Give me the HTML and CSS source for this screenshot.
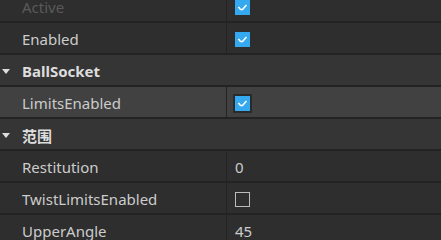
FILE: index.html
```html
<!DOCTYPE html>
<html lang="zh">
<head>
    <meta charset="UTF-8">
    <title>Properties</title>
    <link rel="stylesheet" href="styles.css">
</head>
<body>
    <div class="props">
        <div class="row first">
            <div class="name dim">Active</div>
            <div class="value"><span class="check on"><svg viewBox="0 0 15 15"><polyline points="3.5,7 5.5,9.5 7.5,9.5 11.5,5"/></svg></span></div>
        </div>
        <div class="row">
            <div class="name">Enabled</div>
            <div class="value"><span class="check on"><svg viewBox="0 0 15 15"><polyline points="3.5,7 5.5,9.5 7.5,9.5 11.5,5"/></svg></span></div>
        </div>
        <div class="row group">
            <span class="arrow"></span>
            <div class="name">BallSocket</div>
        </div>
        <div class="row selected">
            <div class="name">LimitsEnabled</div>
            <div class="value"><span class="focus"><span class="check on"><svg viewBox="0 0 15 15"><polyline points="3.5,7 5.5,9.5 7.5,9.5 11.5,5"/></svg></span></span></div>
        </div>
        <div class="row group">
            <span class="arrow"></span>
            <div class="name">范围</div>
        </div>
        <div class="row">
            <div class="name">Restitution</div>
            <div class="value">0</div>
        </div>
        <div class="row">
            <div class="name">TwistLimitsEnabled</div>
            <div class="value"><span class="check"></span></div>
        </div>
        <div class="row">
            <div class="name">UpperAngle</div>
            <div class="value">45</div>
        </div>
    </div>
</body>
</html>
```

FILE: styles.css
```css
body {
    margin: 0;
    background-color: #2e2e2e;
    font-family: "Noto Sans", "Noto Sans CJK SC", sans-serif;
    font-size: 15px;
    color: #cccccc;
    overflow: hidden;
}
.props {
    margin-top: -9px;
}
.row {
    display: flex;
    height: 30px;
    border-bottom: 2px solid #232323;
    background-color: #2e2e2e;
    position: relative;
}
.row .name {
    width: 204px;
    padding-left: 22px;
    padding-top: 2px;
    display: flex;
    align-items: center;
    border-right: 1px solid #232323;
}
.row .value {
    flex: 1;
    display: flex;
    align-items: center;
    padding-left: 8px;
    padding-top: 2px;
}
.dim {
    color: #5a5a5a;
}
.group {
    background-color: #353535;
}
.group .name {
    border-right: none;
    font-weight: bold;
    color: #dddddd;
}
.selected {
    background-color: #414141;
}
.arrow {
    position: absolute;
    left: 2px;
    top: 14px;
    width: 0;
    height: 0;
    border-left: 4px solid transparent;
    border-right: 4px solid transparent;
    border-top: 5px solid #dddddd;
}
.check {
    width: 13px;
    height: 13px;
    border: 1px solid #bbbbbb;
    display: block;
}
.check.on {
    width: 15px;
    height: 15px;
    border: none;
    background-color: #35a9f0;
}
.check svg {
    display: block;
    width: 15px;
    height: 15px;
}
.check polyline {
    fill: none;
    stroke: #ffffff;
    stroke-width: 1.6;
}
.focus {
    padding: 2px;
    margin-left: -2px;
    background-color: #2a2a2a;
}
```
